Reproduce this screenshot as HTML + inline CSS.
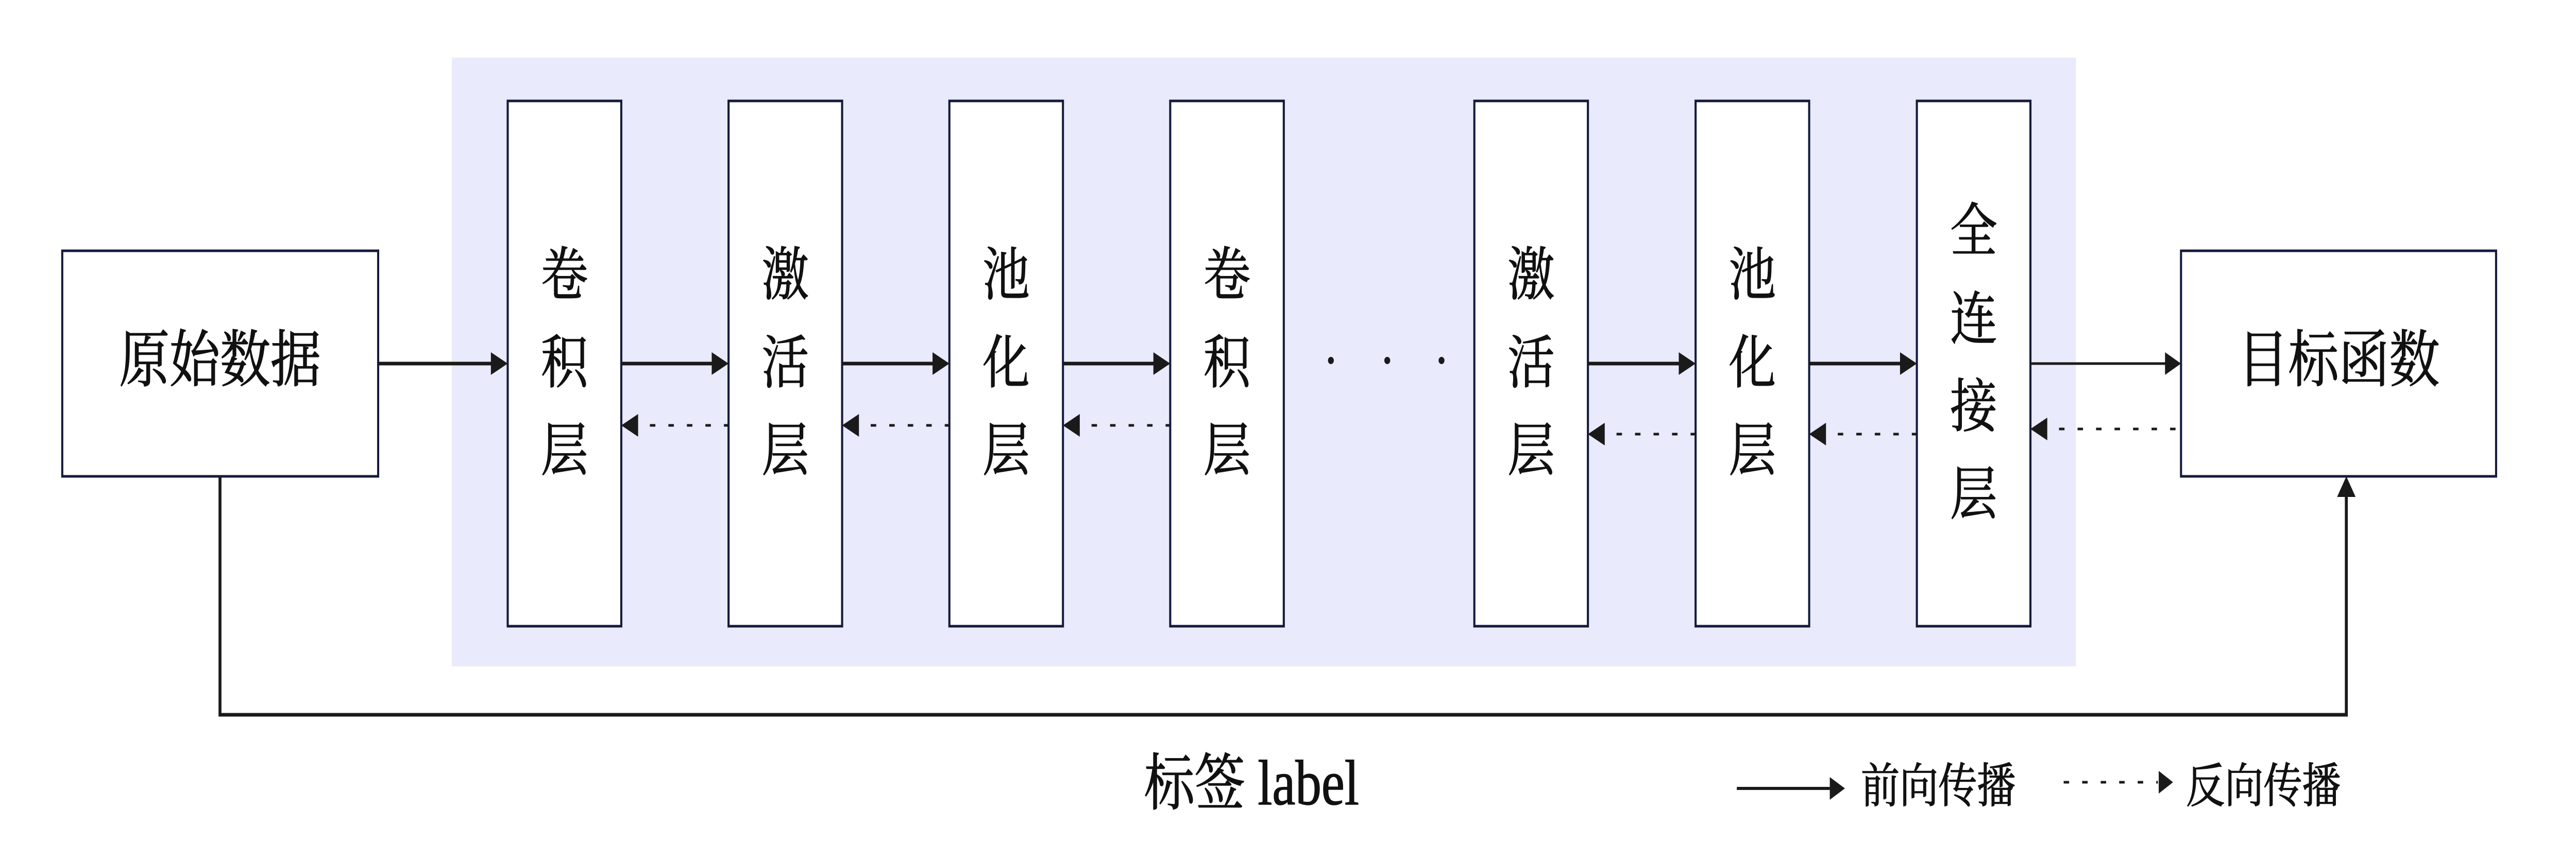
<!DOCTYPE html>
<html><head><meta charset="utf-8"><style>
html,body{margin:0;padding:0;background:#fff;width:100%;height:100%;overflow:hidden;}
svg{display:block;width:100vw;height:100vh}
text{font-family:"Liberation Serif","Noto Serif CJK SC",serif;fill:#111;stroke:#111;stroke-width:1.5;}
</style></head><body>
<svg viewBox="0 0 6124 1670" preserveAspectRatio="none" xmlns="http://www.w3.org/2000/svg">
<rect x="1074" y="112" width="3861" height="1182" fill="#e9eafb"/>
<g fill="#fff" stroke="#141a3c" stroke-width="5">
<rect x="148" y="487" width="751" height="438"/>
<rect x="5185" y="487" width="749" height="438"/>
<rect x="1207" y="196" width="270" height="1020"/>
<rect x="1732" y="196" width="270" height="1020"/>
<rect x="2257" y="196" width="270" height="1020"/>
<rect x="2782" y="196" width="270" height="1020"/>
<rect x="3505" y="196" width="270" height="1020"/>
<rect x="4031" y="196" width="270" height="1020"/>
<rect x="4557" y="196" width="270" height="1020"/>
</g>
<g stroke="#1a1a1a" stroke-width="7" fill="none">
<line x1="899" y1="706" x2="1170" y2="706"/>
<line x1="1477" y1="706" x2="1695" y2="706"/>
<line x1="2002" y1="706" x2="2220" y2="706"/>
<line x1="2527" y1="706" x2="2745" y2="706"/>
<line x1="3775" y1="706" x2="3994" y2="706"/>
<line x1="4301" y1="706" x2="4520" y2="706"/>
<line x1="4827" y1="706" x2="5150" y2="706" stroke-width="5"/>
<polyline points="523,925 523,1388 5578,1388 5578,960"/>
<line x1="4129" y1="1531" x2="4350" y2="1531" stroke-width="6"/>
</g>
<g fill="#1a1a1a">
<polygon points="1207,706 1167,684 1167,728"/>
<polygon points="1732,706 1692,684 1692,728"/>
<polygon points="2257,706 2217,684 2217,728"/>
<polygon points="2782,706 2742,684 2742,728"/>
<polygon points="4031,706 3991,684 3991,728"/>
<polygon points="4557,706 4517,684 4517,728"/>
<polygon points="5185,706 5147,684 5147,728"/>
<polygon points="5578,925 5556,965 5600,965"/>
<polygon points="4386,1531 4350,1509 4350,1553"/>
<polygon points="5166,1519 5132,1497 5132,1541"/>
<polygon points="1477,826 1517,804 1517,848"/>
<polygon points="2002,826 2042,804 2042,848"/>
<polygon points="2527,826 2567,804 2567,848"/>
<polygon points="3775,843 3815,821 3815,865"/>
<polygon points="4301,843 4341,821 4341,865"/>
<polygon points="4827,833 4867,811 4867,855"/>
<circle cx="3164" cy="700" r="7"/><circle cx="3298" cy="700" r="7"/><circle cx="3427" cy="700" r="7"/>
</g>
<g stroke="#1a1a1a" stroke-width="5" stroke-dasharray="13 31" fill="none">
<line x1="1545" y1="826" x2="1732" y2="826"/>
<line x1="2070" y1="826" x2="2257" y2="826"/>
<line x1="2595" y1="826" x2="2782" y2="826"/>
<line x1="3843" y1="843" x2="4031" y2="843"/>
<line x1="4369" y1="843" x2="4557" y2="843"/>
<line x1="4895" y1="833" x2="5185" y2="833"/>
<line x1="4906" y1="1519" x2="5130" y2="1519"/>
</g>
<g font-size="120" text-anchor="middle">
<text x="523" y="740">原始数据</text>
<text x="5560" y="740">目标函数</text>
<g font-size="112">
<text x="1342" y="572">卷</text><text x="1342" y="743">积</text><text x="1342" y="913">层</text>
<text x="1867" y="572">激</text><text x="1867" y="743">活</text><text x="1867" y="913">层</text>
<text x="2392" y="572">池</text><text x="2392" y="743">化</text><text x="2392" y="913">层</text>
<text x="2917" y="572">卷</text><text x="2917" y="743">积</text><text x="2917" y="913">层</text>
<text x="3640" y="572">激</text><text x="3640" y="743">活</text><text x="3640" y="913">层</text>
<text x="4166" y="572">池</text><text x="4166" y="743">化</text><text x="4166" y="913">层</text>
<text x="4692" y="487">全</text><text x="4692" y="658">连</text><text x="4692" y="828">接</text><text x="4692" y="998">层</text>
</g>
</g>
<text x="2720" y="1562" font-size="120">标签 <tspan font-size="124">label</tspan></text>
<text x="4424" y="1558" font-size="92">前向传播</text>
<text x="5197" y="1558" font-size="92">反向传播</text>
</svg>
</body></html>
